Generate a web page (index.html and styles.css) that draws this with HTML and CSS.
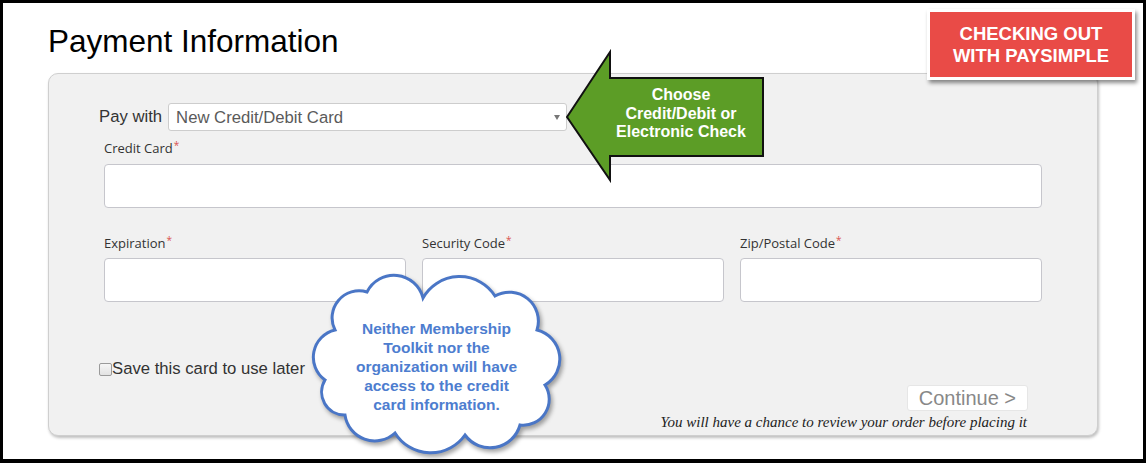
FILE: index.html
```html
<!DOCTYPE html>
<html lang="en">
<head>
<meta charset="utf-8">
<title>Payment Information</title>
<link rel="stylesheet" href="styles.css">
</head>
<body>
<div class="frame">
  <h1 class="title">Payment Information</h1>
  <div class="panel">
    <div class="pay-row">
      <label class="pay-label" for="paywith">Pay with</label>
      <div class="select-wrap">
        <select id="paywith" class="select">
          <option>New Credit/Debit Card</option>
        </select>
        <span class="select-arrow"></span>
      </div>
    </div>
    <div class="field field-card">
      <label class="field-label">Credit Card<span class="req">*</span></label>
      <input class="input" type="text">
    </div>
    <div class="field-grid">
      <div class="field">
        <label class="field-label">Expiration<span class="req">*</span></label>
        <input class="input" type="text">
      </div>
      <div class="field">
        <label class="field-label">Security Code<span class="req">*</span></label>
        <input class="input" type="text">
      </div>
      <div class="field">
        <label class="field-label">Zip/Postal Code<span class="req">*</span></label>
        <input class="input" type="text">
      </div>
    </div>
    <label class="save-row"><input type="checkbox" class="check">Save this card to use later</label>
    <div class="footer">
      <button class="continue" type="button">Continue &gt;</button>
      <p class="note">You will have a chance to review your order before placing it</p>
    </div>
  </div>

  <div class="badge">CHECKING OUT<br>WITH PAYSIMPLE</div>

  <div class="arrow">
    <svg class="arrow-svg" width="210" height="140" viewBox="0 0 210 140">
      <polygon points="7,69 50,4 50,30 203,30 203,108 50,108 50,132" fill="#5c9d26" stroke="#111" stroke-width="2" stroke-linejoin="miter"/>
    </svg>
    <div class="arrow-text">Choose<br>Credit/Debit or<br>Electronic Check</div>
  </div>

  <div class="cloud">
    <svg class="cloud-svg" width="265" height="190" viewBox="0 0 265 190">
      <path d="M30,60 A27,27 0 0 1 62,22 A30,30 0 0 1 118,28 A42,42 0 0 1 190,26 A29,29 0 0 1 232,60 A30,30 0 0 1 240,115 A26,26 0 0 1 215,155 A31,31 0 0 1 160,165 A42,42 0 0 1 90,163 A30,30 0 0 1 40,145 A23,23 0 0 1 20,110 A28,28 0 0 1 30,60 Z" fill="#fff" stroke="#4a76c6" stroke-width="3"/>
    </svg>
    <div class="cloud-text">Neither Membership<br>Toolkit nor the<br>organization will have<br>access to the credit<br>card information.</div>
  </div>
</div>
</body>
</html>
```
FILE: styles.css
```css
* { box-sizing: border-box; }
html, body { margin: 0; padding: 0; }
body {
  background: #000;
  font-family: "Liberation Sans", Arial, sans-serif;
  width: 1146px;
  height: 463px;
  overflow: hidden;
}
.frame {
  position: relative;
  margin: 3px 3px 0 3px;
  width: 1140px;
  height: 456px;
  background: #fff;
  padding: 20px 0 0 45px;
}
.title {
  margin: 0 0 14px 0;
  font-family: "Liberation Sans", Arial, sans-serif;
  font-weight: normal;
  font-size: 31.5px;
  line-height: 36px;
  color: #000;
}
.panel {
  width: 1050px;
  height: 363px;
  background: #f1f1f1;
  border: 1px solid #cfcfcf;
  border-radius: 10px;
  box-shadow: 1px 2px 3px rgba(0,0,0,0.25);
  padding: 29px 55px 0 55px;
}
.pay-row {
  display: flex;
  align-items: center;
  margin-left: -5px;
  height: 28px;
}
.pay-label {
  font-size: 16.7px;
  color: #333;
  margin-right: 6px;
}
.select-wrap {
  position: relative;
  width: 399px;
  height: 28px;
}
.select {
  appearance: none;
  -webkit-appearance: none;
  width: 100%;
  height: 28px;
  border: 1px solid #cdcdcd;
  border-radius: 3px;
  background: #fff;
  font-family: "Liberation Sans", Arial, sans-serif;
  font-size: 16.7px;
  color: #5a5a5a;
  padding: 0 20px 0 7px;
  margin: 0;
}
.select-arrow {
  position: absolute;
  right: 7px;
  top: 12px;
  width: 0;
  height: 0;
  border-left: 3.5px solid transparent;
  border-right: 3.5px solid transparent;
  border-top: 5px solid #777;
  pointer-events: none;
}
.field { display: flex; flex-direction: column; }
.field-card { margin-top: 8px; }
.field-label {
  font-family: "Open Sans", "Noto Sans", sans-serif;
  font-size: 13px;
  line-height: 18px;
  height: 18px;
  color: #333;
  margin-bottom: 7px;
}
.req {
  position: relative;
  top: -4px;
  color: #d9534f;
  font-size: 10px;
  line-height: 0;
  margin-left: 1px;
}
.input {
  height: 44px;
  width: 100%;
  border: 1px solid #c6c6cc;
  border-radius: 4px;
  background: #fff;
  margin: 0;
  padding: 0 8px;
}
.field-grid {
  display: grid;
  grid-template-columns: 302px 302px 302px;
  column-gap: 16px;
  margin-top: 26px;
}
.field-grid .field-label { margin-bottom: 6px; }
.save-row {
  display: flex;
  align-items: center;
  margin: 58px 0 0 -5px;
  height: 18px;
  font-size: 16.7px;
  line-height: 18px;
  color: #333;
}
.check {
  appearance: none;
  -webkit-appearance: none;
  margin: 0;
  width: 13px;
  height: 13px;
  border: 1px solid #9a9a9a;
  border-radius: 2px;
  background: linear-gradient(#f6f6f6, #e2e2e2);
}
.footer {
  display: flex;
  flex-direction: column;
  align-items: flex-end;
  margin: 7px 15px 0 0;
}
.continue {
  height: 26px;
  padding: 0 11px;
  margin: 0 -1px 0 0;
  border: 1px solid #e6e6e6;
  border-radius: 3px;
  background: #fff;
  font-family: "Liberation Sans", Arial, sans-serif;
  font-size: 20px;
  line-height: 24px;
  color: #888;
}
.note {
  margin: 3px 0 0 0;
  font-family: "Liberation Serif", "Times New Roman", serif;
  font-style: italic;
  font-size: 15px;
  line-height: 16px;
  color: #222;
}
.badge {
  position: absolute;
  left: 924px;
  top: 6px;
  width: 208px;
  height: 71px;
  border: 3px solid #fff;
  background: #e94b47;
  box-shadow: 2px 3px 4px rgba(0,0,0,0.45);
  display: flex;
  align-items: center;
  justify-content: center;
  text-align: center;
  color: #fff;
  font-weight: bold;
  font-size: 18.5px;
  line-height: 22px;
}
.arrow {
  position: absolute;
  left: 557px;
  top: 45px;
  width: 210px;
  height: 140px;
}
.arrow-svg { display: block; }
.arrow-text {
  position: absolute;
  left: 40px;
  top: 38px;
  width: 162px;
  text-align: center;
  color: #fff;
  font-weight: bold;
  font-size: 16px;
  line-height: 18.5px;
}
.cloud {
  position: absolute;
  left: 302px;
  top: 267px;
  width: 265px;
  height: 190px;
}
.cloud-svg {
  display: block;
  filter: drop-shadow(2px 3px 2px rgba(0,0,0,0.35));
}
.cloud-text {
  position: absolute;
  left: 22px;
  top: 49px;
  width: 219px;
  text-align: center;
  color: #4d7dcf;
  font-weight: bold;
  font-size: 15.5px;
  line-height: 19px;
}
```
